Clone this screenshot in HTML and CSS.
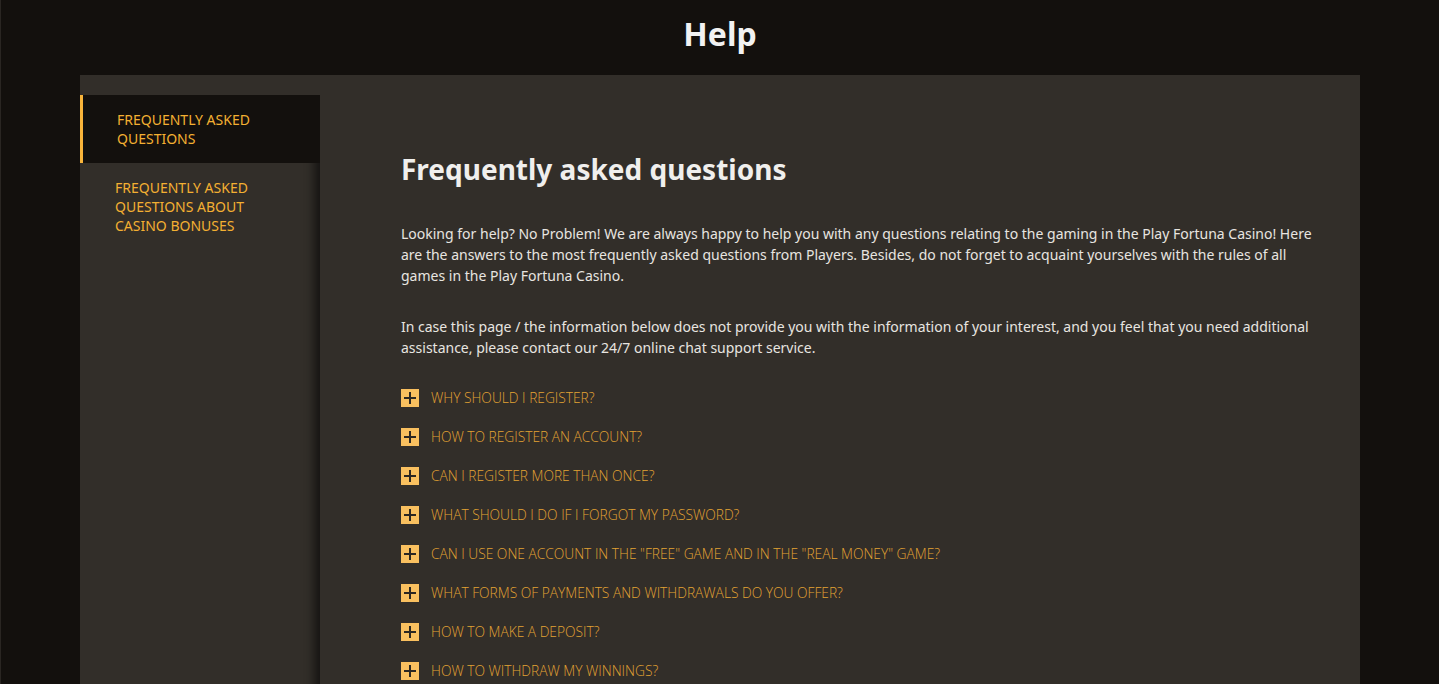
FILE: index.html
```html
<!DOCTYPE html>
<html lang="en">
<head>
    <meta charset="UTF-8">
    <meta name="viewport" content="width=device-width, initial-scale=1.0">
    <title>Help</title>
    <link rel="stylesheet" href="styles.css">
</head>
<body>

    <header class="top">
        <h1>Help</h1>
    </header>

    <div class="panel">
        <nav class="side">
            <a href="#" class="side-link active">FREQUENTLY ASKED QUESTIONS</a>
            <a href="#" class="side-link">FREQUENTLY ASKED QUESTIONS ABOUT CASINO BONUSES</a>
        </nav>

        <main class="main">
            <h2>Frequently asked questions</h2>
            <p>Looking for help? No Problem! We are always happy to help you with any questions relating to the gaming in the Play Fortuna Casino! Here are the answers to the most frequently asked questions from Players. Besides, do not forget to acquaint yourselves with the rules of all games in the Play Fortuna Casino.</p>
            <p>In case this page / the information below does not provide you with the information of your interest, and you feel that you need additional assistance, please contact our 24/7 online chat support service.</p>

            <ul class="faq">
                <li><span class="plus"></span>WHY SHOULD I REGISTER?</li>
                <li><span class="plus"></span>HOW TO REGISTER AN ACCOUNT?</li>
                <li><span class="plus"></span>CAN I REGISTER MORE THAN ONCE?</li>
                <li><span class="plus"></span>WHAT SHOULD I DO IF I FORGOT MY PASSWORD?</li>
                <li><span class="plus"></span>CAN I USE ONE ACCOUNT IN THE "FREE" GAME AND IN THE "REAL MONEY" GAME?</li>
                <li><span class="plus"></span>WHAT FORMS OF PAYMENTS AND WITHDRAWALS DO YOU OFFER?</li>
                <li><span class="plus"></span>HOW TO MAKE A DEPOSIT?</li>
                <li><span class="plus"></span>HOW TO WITHDRAW MY WINNINGS?</li>
            </ul>
        </main>
    </div>

</body>
</html>
```

FILE: styles.css
```css
* {
    margin: 0;
    padding: 0;
    box-sizing: border-box;
}

body {
    background-color: #13100d;
    color: #e8e5e0;
    font-family: "Noto Sans", "Open Sans", sans-serif;
    border-left: 1px solid #2a2622;
    height: 100vh;
    overflow: hidden;
}

/* Titolo in alto */
.top {
    height: 75px;
    display: flex;
    align-items: center;
    justify-content: center;
}

.top h1 {
    font-size: 32px;
    font-weight: bold;
    color: #f2f2f2;
    padding-bottom: 9px;
}

.panel {
    display: flex;
    width: 1280px;
    margin: 0 0 0 79px;
    background: #322e29;
    padding-top: 20px;
    min-height: 700px;
}

/* Menu laterale */
.side {
    width: 240px;
    flex-shrink: 0;
    box-shadow: inset -12px 0 10px -6px rgba(0, 0, 0, 0.55);
}

.side-link {
    display: block;
    padding: 15px 40px 9px 35px;
    font-size: 14px;
    line-height: 19px;
    color: #f4b032;
    text-decoration: none;
}

.side-link.active {
    background: #13100d;
    border-left: 3px solid #f8b43a;
    padding: 15px 40px 15px 34px;
}

/* Contenuto */
.main {
    flex: 1;
    padding: 55px 42px 0 81px;
}

.main h2 {
    font-size: 28px;
    font-weight: bold;
    color: #f0efed;
    line-height: 38px;
    margin-bottom: 35px;
}

.main p {
    font-size: 14px;
    line-height: 21px;
    margin-bottom: 30px;
}

.faq {
    list-style: none;
    margin-top: -10px;
}

.faq li {
    display: flex;
    align-items: center;
    height: 39px;
    font-family: "Open Sans", "Noto Sans", sans-serif;
    font-weight: 300;
    font-size: 13.75px;
    color: #e3a333;
}

.plus {
    position: relative;
    width: 18px;
    height: 18px;
    background: #f9c05f;
    margin-right: 12px;
    flex-shrink: 0;
}

.plus::before,
.plus::after {
    content: "";
    position: absolute;
    background: #2b2722;
}

.plus::before {
    left: 3px;
    top: 8px;
    width: 12px;
    height: 2px;
}

.plus::after {
    left: 8px;
    top: 3px;
    width: 2px;
    height: 12px;
}
```
